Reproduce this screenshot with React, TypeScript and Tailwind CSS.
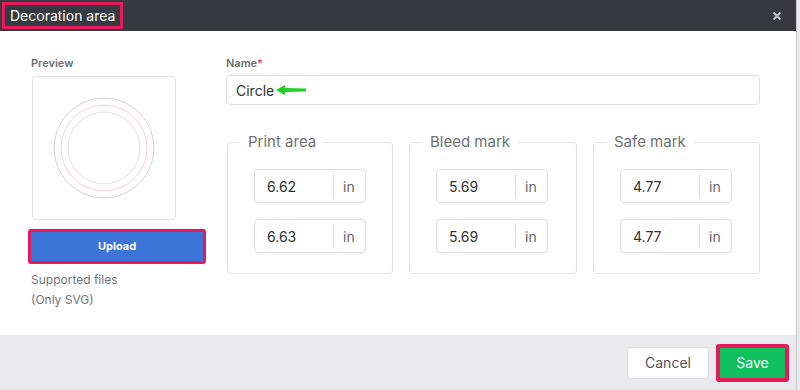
import React from 'react';

const font = { fontFamily: 'Inter, "Noto Sans", sans-serif' };

const UnitInput: React.FC<{ value: string }> = ({ value }) => (
  <div className="flex h-[34px] w-[112px] items-center rounded-[4px] border border-[#dcdee2] bg-white">
    <span className="flex-1 pl-[12px] text-[14px] text-[#333]">{value}</span>
    <span className="h-[24px] w-px bg-[#dcdee2]" />
    <span className="w-[31px] pl-[9px] text-[14px] text-[#666]">in</span>
  </div>
);

const MarkGroup: React.FC<{ title: string; values: string[]; width: string }> = ({ title, values, width }) => (
  <div className={`${width} flex h-[132px] flex-col rounded-[4px] border border-[#e3e4e8] px-[26px]`}>
    <p className="-mt-[10px] -ml-[14px] w-fit bg-white px-[8px] text-[15px] leading-[18px] text-[#707070]">{title}</p>
    <div className="mt-[18px] flex flex-col gap-[16px]">
      {values.map((v, i) => (
        <UnitInput key={i} value={v} />
      ))}
    </div>
  </div>
);

export default function App() {
  return (
    <div className="flex h-[390px] w-[800px] bg-[#e9eaee]" style={font}>
      <div className="flex h-full w-[797px] flex-col border-r border-[#c8c9cc]">
        <header className="flex h-[31px] items-center justify-between bg-[#353a41] pl-[2px] pr-[14px]">
          <div className="flex h-[27px] items-center border-[3px] border-[#e8195a] px-[5px] text-[14px] text-white">
            Decoration area
          </div>
          <svg width="10" height="10" viewBox="0 0 10 10" className="text-[#b9bcc2]">
            <path d="M1.5 1.5 L8.5 8.5 M8.5 1.5 L1.5 8.5" stroke="currentColor" strokeWidth="2.2" />
          </svg>
        </header>

        <main className="flex h-[304px] bg-white pl-[31px] pt-[26px]">
          <aside className="flex w-[176px] flex-col">
            <p className="text-[11px] font-semibold leading-[13px] text-[#6b6f78]">Preview</p>
            <div className="ml-px mt-[6px] flex h-[144px] w-[144px] items-center justify-center rounded-[4px] border border-[#dcdee2]">
              <svg width="104" height="104" viewBox="0 0 104 104">
                <circle cx="52" cy="52" r="50" fill="none" stroke="#c5c8cc" strokeWidth="0.8" />
                <circle cx="52" cy="52" r="43" fill="none" stroke="#efc4c8" strokeWidth="0.8" />
                <circle cx="52" cy="52" r="36" fill="none" stroke="#d6ded6" strokeWidth="0.8" />
              </svg>
            </div>
            <div className="-ml-[3px] mt-[9px] flex h-[35px] w-[178px] rounded-[3px] border-[3px] border-[#e8195a]">
              <button className="flex-1 bg-[#3d74d8] text-[11px] font-bold text-white">Upload</button>
            </div>
            <p className="mt-[6px] text-[12px] leading-[20px] text-[#72767d]">
              Supported files
              <br />
              (Only SVG)
            </p>
          </aside>

          <section className="ml-[19px] flex w-[534px] flex-col">
            <p className="text-[11px] font-semibold leading-[13px] text-[#6b6f78]">
              Name<span className="text-[#e24b4b]">*</span>
            </p>
            <div className="mt-[5px] flex h-[30px] items-center rounded-[4px] border border-[#dcdee2] px-[9px]">
              <span className="text-[14px] text-[#333]">Circle</span>
              <svg width="30" height="10" viewBox="0 0 30 10" className="ml-[2px]">
                <path d="M0 5 L9 0 L9 3 L30 3.6 L30 6.4 L9 7 L9 10 Z" fill="#22d022" />
              </svg>
            </div>
            <div className="mt-[37px] flex gap-[16px] pl-px">
              <MarkGroup title="Print area" values={['6.62', '6.63']} width="w-[167px]" />
              <MarkGroup title="Bleed mark" values={['5.69', '5.69']} width="w-[169px]" />
              <MarkGroup title="Safe mark" values={['4.77', '4.77']} width="w-[168px]" />
            </div>
          </section>
        </main>

        <footer className="flex flex-1 items-center justify-end gap-[7px] pr-[7px]">
          <button className="h-[32px] w-[82px] rounded-[4px] border border-[#d9dbdf] bg-white text-[14px] text-[#555]">
            Cancel
          </button>
          <div className="flex h-[38px] w-[73px] rounded-[3px] border-[4px] border-[#e8195a]">
            <button className="flex-1 bg-[#10c05c] text-[14px] text-white">Save</button>
          </div>
        </footer>
      </div>
    </div>
  );
}
